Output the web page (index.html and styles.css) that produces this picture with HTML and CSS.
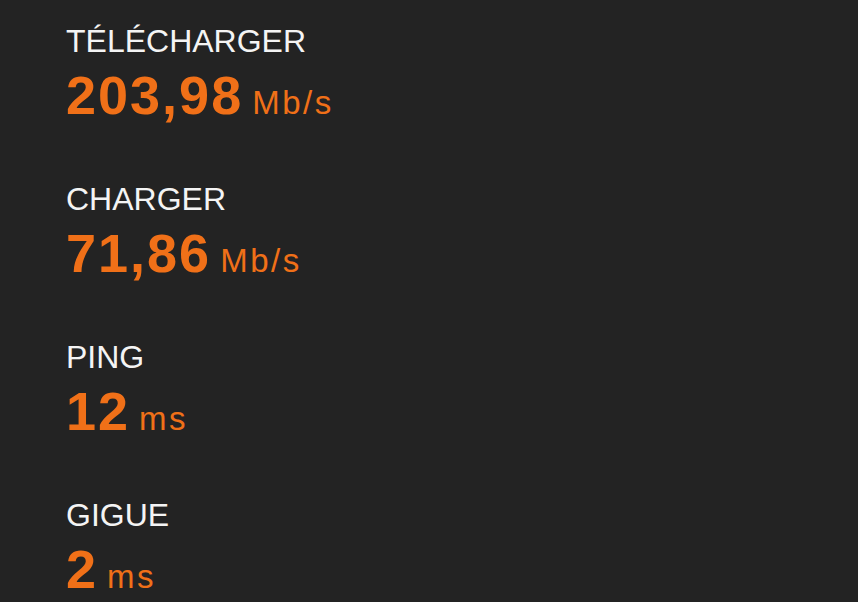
FILE: index.html
```html
<!DOCTYPE html>
<html lang="fr">
<head>
    <meta charset="UTF-8">
    <meta name="viewport" content="width=device-width, initial-scale=1.0">
    <title>Test de vitesse</title>
    <link rel="stylesheet" href="styles.css">
</head>
<body>
    <div class="results">
        <div class="stat">
            <div class="stat-label">TÉLÉCHARGER</div>
            <div class="stat-value">203,98<span class="stat-unit">Mb/s</span></div>
        </div>
        <div class="stat">
            <div class="stat-label">CHARGER</div>
            <div class="stat-value">71,86<span class="stat-unit">Mb/s</span></div>
        </div>
        <div class="stat">
            <div class="stat-label">PING</div>
            <div class="stat-value">12<span class="stat-unit">ms</span></div>
        </div>
        <div class="stat">
            <div class="stat-label">GIGUE</div>
            <div class="stat-value">2<span class="stat-unit">ms</span></div>
        </div>
    </div>
</body>
</html>
```

FILE: styles.css
```css
body {
    font-family: 'Liberation Sans', Arial, sans-serif;
    background-color: #232323;
    margin: 0;
    padding: 25px 0 0 66px;
    overflow: hidden;
}
.results {
    display: flex;
    flex-direction: column;
    gap: 61px;
}
.stat {
    display: flex;
    flex-direction: column;
    gap: 11px;
}
.stat-label {
    color: #f4f4f4;
    font-size: 32px;
    line-height: 32px;
}
.stat-value {
    color: #f07018;
    font-size: 54px;
    font-weight: 700;
    line-height: 54px;
    letter-spacing: 2px;
}
.stat-unit {
    font-size: 33px;
    font-weight: 400;
    line-height: 1;
    letter-spacing: 2.5px;
    margin-left: 9px;
}
```
